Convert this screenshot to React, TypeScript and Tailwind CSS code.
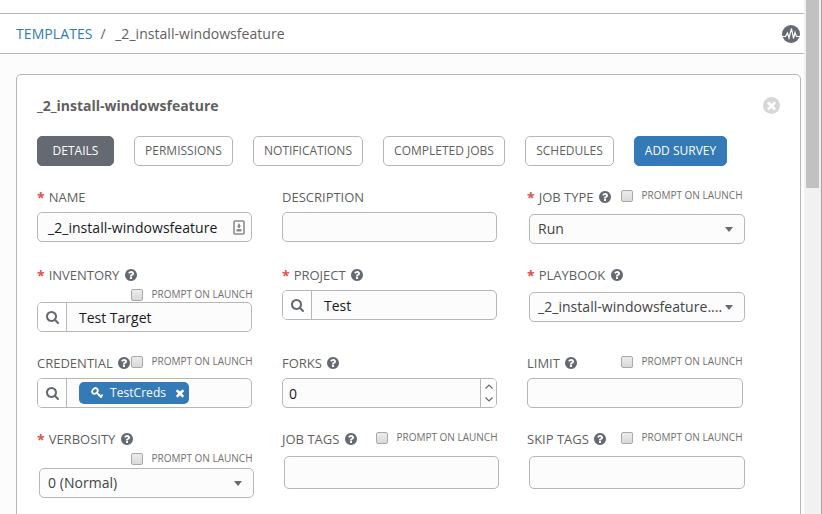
import type { ReactNode } from "react";

const QUESTION =
  "M1024 1376v-192q0-14-9-23t-23-9h-192q-14 0-23 9t-9 23v192q0 14 9 23t23 9h192q14 0 23-9t9-23zm256-672q0-88-55.5-163t-138.5-116-170-41q-243 0-371 213-15 24 8 42l132 100q7 6 19 6 16 0 25-12 53-68 86-92 34-24 86-24 48 0 85.5 26t37.5 59q0 38-20 61t-68 45q-63 28-115.5 86.5t-52.5 125.5v36q0 14 9 23t23 9h192q14 0 23-9t9-23q0-19 21.5-49.5t54.5-49.5q32-18 49-28.5t46-35 44.5-48 28-60.5 12.5-81zm384 192q0 209-103 385.5t-279.5 279.5-385.5 103-385.5-103-279.5-279.5-103-385.5 103-385.5 279.5-279.5 385.5-103 385.5 103 279.5 279.5 103 385.5z";
const SEARCH =
  "M1152 832q0-185-131.5-316.5t-316.5-131.5-316.5 131.5-131.5 316.5 131.5 316.5 316.5 131.5 316.5-131.5 131.5-316.5zm512 832q0 54-38 90t-90 38q-54 0-90-38l-343-342q-179 124-399 124-143 0-273.5-55.5t-225-150-150-225-55.5-273.5 55.5-273.5 150-225 225-150 273.5-55.5 273.5 55.5 225 150 150 225 55.5 273.5q0 220-124 399l343 343q37 37 37 90z";
const TIMES =
  "M1490 1322q0 40-28 68l-136 136q-28 28-68 28t-68-28l-294-294-294 294q-28 28-68 28t-68-28l-136-136q-28-28-28-68t28-68l294-294-294-294q-28-28-28-68t28-68l136-136q28-28 68-28t68 28l294 294 294-294q28-28 68-28t68 28l136 136q28 28 28 68t-28 68l-294 294 294 294q28 28 28 68z";

function Icon({ d, className }: { d: string; className: string }) {
  return (
    <svg viewBox="0 0 1792 1792" fill="currentColor" className={`shrink-0 ${className}`}>
      <path d={d} />
    </svg>
  );
}

function Tab({ children, className }: { children: ReactNode; className: string }) {
  return (
    <button
      className={`flex h-[30px] shrink-0 items-center justify-center rounded-[5px] border pb-px text-[12px] whitespace-nowrap ${className}`}
    >
      {children}
    </button>
  );
}

function Prompt() {
  return (
    <div className="flex h-[13px] w-[121px] shrink-0 items-start">
      <span className="size-[12px] shrink-0 rounded-[2px] border border-[#a9a9a9] bg-linear-to-b from-[#ececec] to-[#d9d9d9]" />
      <span className="-mt-px ml-[8.5px] text-[10px] leading-[12px] whitespace-nowrap text-[#707070]">PROMPT ON LAUNCH</span>
    </div>
  );
}

type FieldProps = {
  label: string;
  required?: boolean;
  help?: boolean;
  prompt?: "inline" | "below";
  tight?: boolean;
  gap: string;
  children: ReactNode;
};

function Field({ label, required, help, prompt, tight, gap, children }: FieldProps) {
  return (
    <div className="flex w-[245px] shrink-0 flex-col">
      <div className="flex h-5 w-[215px] items-start justify-between">
        <div className="flex h-5 items-center whitespace-nowrap">
          {required && <span className="mr-1 pt-px text-[14px] font-bold text-[#d9534f]">*</span>}
          <span className="pt-[2px] text-[13px]">{label}</span>
          {help && <Icon d={QUESTION} className={`size-[14px] text-[#646972] ${tight ? "ml-[4px] -mr-2" : "ml-[4.5px]"}`} />}
        </div>
        {prompt === "inline" && (
          <div className="pt-[3px]">
            <Prompt />
          </div>
        )}
      </div>
      {prompt === "below" && (
        <div className="flex h-[13px] w-[215px] justify-end pt-1">
          <Prompt />
        </div>
      )}
      <div className={gap}>{children}</div>
    </div>
  );
}

const box = "flex items-center rounded-[5px] border border-[#b7b7b7] bg-[#fcfcfc] text-[14px] whitespace-nowrap overflow-hidden";

function Select({ value, className }: { value: string; className: string }) {
  return (
    <div className={`${box} h-[30px] justify-between pr-[11px] pl-[8px] text-[#444] ${className}`}>
      <span className="pb-[2px] tracking-[0.04px]">{value}</span>
      <svg viewBox="0 0 8 5" className="h-[5px] w-2 shrink-0" fill="#646972">
        <path d="M0 0h8L4 5z" />
      </svg>
    </div>
  );
}

function Lookup({ children }: { children: ReactNode }) {
  return (
    <div className={`${box} h-[30px] w-[215px] text-[#161b1f]`}>
      <span className="flex h-full w-[29px] items-center justify-center border-r border-[#b7b7b7] bg-white pl-px text-[#646972]">
        <Icon d={SEARCH} className="size-[14px]" />
      </span>
      <div className="pl-3">{children}</div>
    </div>
  );
}

export default function App() {
  return (
    <div className="flex h-[514px] w-[822px] overflow-hidden bg-white font-['Open_Sans',sans-serif] text-[#5f5f5f]">
      <main className="flex w-[804px] shrink-0 flex-col bg-[#fcfcfc]">
        <div className="h-[13px] shrink-0 bg-white" />
        <header className="flex h-[41px] shrink-0 items-center justify-between border-y border-[#b7b7b7] bg-white pr-1 pl-4 text-[14px]">
          <nav className="flex whitespace-nowrap">
            <a className="tracking-[0.08px] text-[#337ab7]">TEMPLATES</a>
            <span className="ml-[8px]">/</span>
            <span className="ml-[9.5px] tracking-[0.04px]">_2_install-windowsfeature</span>
          </nav>
          <svg viewBox="0 0 18 18" className="size-[18px]">
            <circle cx="9" cy="9" r="9" fill="#646972" />
            <path d="M0 11.500h3.500L5.500 8l1.500 5L9.500 3.500l2 10L13 7.500l1.500 4H18" fill="none" stroke="#fff" strokeWidth="1.200" />
          </svg>
        </header>

        <section className="mt-5 ml-4 flex h-[460px] w-[785px] shrink-0 flex-col rounded-t-[5px] border border-[#b7b7b7] bg-white pl-5">
          <div className="mt-[20px] flex h-5 items-center justify-between pr-5">
            <h1 className="text-[14px] font-bold whitespace-nowrap">_2_install-windowsfeature</h1>
            <span className="flex size-[17px] items-center justify-center rounded-full bg-[#d7d7d7] text-white">
              <Icon d={TIMES} className="size-[13px]" />
            </span>
          </div>

          <div className="mt-[21px] flex gap-5">
            <Tab className="w-[77px] border-[#646972] bg-[#646972] text-white">DETAILS</Tab>
            <Tab className="w-[99px] border-[#b7b7b7] bg-white">PERMISSIONS</Tab>
            <Tab className="w-[110px] border-[#b7b7b7] bg-white">NOTIFICATIONS</Tab>
            <Tab className="w-[122px] border-[#b7b7b7] bg-white">COMPLETED JOBS</Tab>
            <Tab className="w-[89px] border-[#b7b7b7] bg-white">SCHEDULES</Tab>
            <Tab className="w-[93px] rounded-[3px] border-[#337ab7] bg-[#337ab7] text-white">ADD SURVEY</Tab>
          </div>

          <div className="mt-[21px] flex h-[78px] shrink-0">
            <Field label="NAME" required gap="mt-[5px]">
              <div className={`${box} h-[30px] w-[215px] justify-between pr-[6px] pl-[10px] text-[#161b1f]`}>
                <span className="tracking-[0.04px]">_2_install-windowsfeature</span>
                <svg viewBox="0 0 12 15" className="h-[15px] w-3 shrink-0">
                  <rect x="1" y="1" width="10" height="13" rx="1" fill="#fff" stroke="#8c8c8c" strokeWidth="1.600" />
                  <path d="M6 3l1.500 2.500v1.500h-3V5.500zM5 6h2v2H5zM3.500 9h5v2.500h-5z" fill="#8c8c8c" />
                </svg>
              </div>
            </Field>
            <Field label="DESCRIPTION" gap="mt-[5px]">
              <div className={`${box} h-[30px] w-[215px]`} />
            </Field>
            <Field label="JOB TYPE" required help prompt="inline" gap="mt-[7px] ml-[2px]">
              <Select value="Run" className="w-[216px]" />
            </Field>
          </div>

          <div className="flex h-[88px] shrink-0">
            <Field label="INVENTORY" required help prompt="below" gap="mt-[4px]">
              <Lookup>Test Target</Lookup>
            </Field>
            <Field label="PROJECT" required help gap="mt-[5px]">
              <Lookup>Test</Lookup>
            </Field>
            <Field label="PLAYBOOK" required help gap="mt-[7px] ml-[2px]">
              <Select value="_2_install-windowsfeature...." className="w-[216px]" />
            </Field>
          </div>

          <div className="flex h-[76px] shrink-0">
            <Field label="CREDENTIAL" help tight prompt="inline" gap="mt-[5px]">
              <Lookup>
                <span className="flex h-[22px] w-[110px] items-center rounded-[5px] bg-[#337ab7] pl-3 text-[12px] text-white">
                  <svg viewBox="0 0 12 12" className="size-3 shrink-0" fill="none" stroke="#fff">
                    <ellipse cx="3.900" cy="4" rx="3.100" ry="2.400" transform="rotate(-45 3.900 4)" strokeWidth="1.800" />
                    <path d="M5.500 5.500l5.200 5.200M7.800 9.400l1.600-1.600M9.800 9.500l1.900-1.900" strokeWidth="1.900" />
                  </svg>
                  <span className="ml-[7px] tracking-[0.05px]">TestCreds</span>
                  <Icon d={TIMES} className="ml-2 size-3" />
                </span>
              </Lookup>
            </Field>
            <Field label="FORKS" help gap="mt-[5px]">
              <div className={`${box} h-[30px] w-[215px] justify-between pl-[6px] text-[#161b1f]`}>
                <span>0</span>
                <span className="flex h-full w-4 flex-col items-center justify-between border-l border-[#b7b7b7] bg-white py-[5px]">
                  <svg viewBox="0 0 8 5" className="h-[5px] w-2" fill="none" stroke="#646972" strokeWidth="1.200">
                    <path d="M.5 4.500L4 1l3.500 3.500" />
                  </svg>
                  <svg viewBox="0 0 8 5" className="h-[5px] w-2" fill="none" stroke="#646972" strokeWidth="1.200">
                    <path d="M.5 .5L4 4 7.500 .5" />
                  </svg>
                </span>
              </div>
            </Field>
            <Field label="LIMIT" help prompt="inline" gap="mt-[5px]">
              <div className={`${box} h-[30px] w-[216px]`} />
            </Field>
          </div>

          <div className="flex shrink-0">
            <Field label="VERBOSITY" required help prompt="below" gap="mt-[6px] ml-[2px]">
              <Select value="0 (Normal)" className="w-[215px]" />
            </Field>
            <Field label="JOB TAGS" help prompt="inline" gap="mt-[7px] ml-[2px]">
              <div className={`${box} h-[33px] w-[215px]`} />
            </Field>
            <Field label="SKIP TAGS" help prompt="inline" gap="mt-[7px] ml-[2px]">
              <div className={`${box} h-[33px] w-[216px]`} />
            </Field>
          </div>
        </section>
      </main>
      <aside className="flex h-full w-[17px] shrink-0 justify-center bg-[#f1f1f1]">
        <div className="h-[188px] w-[13px] bg-[#c1c1c1]" />
      </aside>
      <div className="w-px shrink-0 bg-[#a5a5a5]" />
    </div>
  );
}
